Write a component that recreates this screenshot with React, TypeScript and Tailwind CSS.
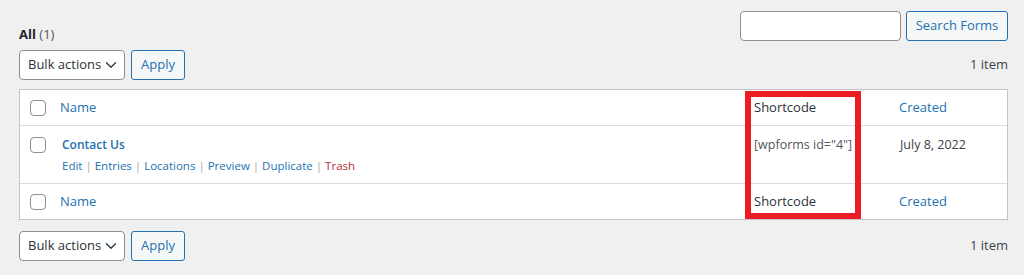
import { ChevronDown } from 'lucide-react';

const font = { fontFamily: '"Open Sans", "Noto Sans", sans-serif' };

const Checkbox = () => (
  <div className="w-4 h-4 rounded-[4px] border border-[#8c8f94] bg-white" />
);

const TableNav = () => (
  <div className="flex items-center justify-between">
    <div className="flex items-center gap-[6px]">
      <div className="flex items-center justify-between w-[106px] h-[30px] pl-[8px] pr-[4px] rounded-[4px] border border-[#8c8f94] bg-white text-[13px] text-[#2c3338] whitespace-nowrap">
        <span>Bulk actions</span>
        <ChevronDown className="w-[18px] h-[18px] shrink-0 text-[#2c3338]" strokeWidth={1.7} />
      </div>
      <button className="h-[30px] w-[54px] rounded-[3px] border border-[#2271b1] bg-[#f6f7f7] text-[13px] text-[#2271b1]">
        Apply
      </button>
    </div>
    <span className="text-[13px] text-[#3c434a]">1 item</span>
  </div>
);

const HeadRow = ({ border }: { border: 'b' | 't' }) => (
  <div
    className={`grid grid-cols-[40px_684px_145px_1fr] h-[36px] items-center text-[13px] ${
      border === 'b' ? 'border-b border-[#dcdcde]' : 'border-t border-[#dcdcde]'
    }`}
  >
    <div className="pl-[10px]">
      <Checkbox />
    </div>
    <span className="text-[#2271b1]">Name</span>
    <span className="pl-[10px] text-[#2c3338]">Shortcode</span>
    <span className="pl-[10px] text-[#2271b1]">Created</span>
  </div>
);

export default function App() {
  const actions = ['Edit', 'Entries', 'Locations', 'Preview', 'Duplicate'];

  return (
    <div style={font} className="w-[1024px] h-[275px] bg-[#f0f0f1] pl-[19px] pr-[16px] overflow-hidden">
      {/* Top: views + search */}
      <div className="flex justify-between items-start h-[50px]">
        <div className="pt-[24px] text-[13px] leading-[20px]">
          <span className="font-bold text-[#1d2327]">All</span>{' '}
          <span className="text-[#50575e]">(1)</span>
        </div>
        <div className="flex items-center gap-[5px] pt-[11px]">
          <div className="w-[161px] h-[30px] rounded-[4px] border border-[#8c8f94] bg-white" />
          <button className="h-[30px] w-[102px] rounded-[3px] border border-[#2271b1] bg-[#f6f7f7] text-[13px] text-[#2271b1]">
            Search Forms
          </button>
        </div>
      </div>

      <TableNav />

      {/* Table */}
      <div className="relative mt-[9px] mb-[11px] border border-[#c3c4c7] bg-white">
        <HeadRow border="b" />
        <div className="grid grid-cols-[40px_684px_145px_1fr] h-[57px] items-start">
          <div className="pl-[10px] pt-[11px]">
            <Checkbox />
          </div>
          <div className="pl-[2px] pt-[9px]">
            <div className="text-[12px] font-semibold text-[#2271b1] leading-[20px]">Contact Us</div>
            <div className="mt-[1px] text-[11.5px] leading-[20px] text-[#a7aaad] whitespace-nowrap">
              {actions.map((a) => (
                <span key={a}>
                  <span className="text-[#2271b1]">{a}</span>
                  {' | '}
                </span>
              ))}
              <span className="text-[#b32d2e]">Trash</span>
            </div>
          </div>
          <div className="pl-[10px] pt-[9px] text-[12.5px] leading-[20px] text-[#50575e]">[wpforms id="4"]</div>
          <div className="pl-[11px] pt-[9px] text-[12.5px] leading-[20px] text-[#3c434a]">July 8, 2022</div>
        </div>
        <HeadRow border="t" />

        {/* Highlight annotation */}
        <div className="absolute left-[725px] top-[1px] w-[116px] h-[128px] border-[6px] border-[#ec1c24] pointer-events-none" />
      </div>

      <TableNav />
    </div>
  );
}
